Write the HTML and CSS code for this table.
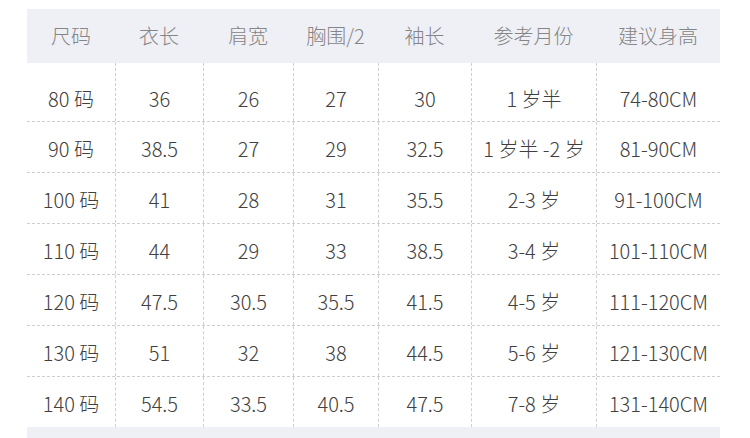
FILE: index.html
```html
<!DOCTYPE html>
<html lang="zh">
<head>
<meta charset="utf-8">
<link rel="stylesheet" href="styles.css">
</head>
<body>
<div class="sheet">
  <div class="row head">
    <div class="cell">尺码</div><div class="cell">衣长</div><div class="cell">肩宽</div><div class="cell">胸围/2</div><div class="cell">袖长</div><div class="cell">参考月份</div><div class="cell">建议身高</div>
  </div>
  <div class="row first">
    <div class="cell">80 码</div><div class="cell">36</div><div class="cell">26</div><div class="cell">27</div><div class="cell">30</div><div class="cell">1 岁半</div><div class="cell">74-80CM</div>
  </div>
  <div class="row">
    <div class="cell">90 码</div><div class="cell">38.5</div><div class="cell">27</div><div class="cell">29</div><div class="cell">32.5</div><div class="cell">1 岁半 -2 岁</div><div class="cell">81-90CM</div>
  </div>
  <div class="row">
    <div class="cell">100 码</div><div class="cell">41</div><div class="cell">28</div><div class="cell">31</div><div class="cell">35.5</div><div class="cell">2-3 岁</div><div class="cell">91-100CM</div>
  </div>
  <div class="row">
    <div class="cell">110 码</div><div class="cell">44</div><div class="cell">29</div><div class="cell">33</div><div class="cell">38.5</div><div class="cell">3-4 岁</div><div class="cell">101-110CM</div>
  </div>
  <div class="row">
    <div class="cell">120 码</div><div class="cell">47.5</div><div class="cell">30.5</div><div class="cell">35.5</div><div class="cell">41.5</div><div class="cell">4-5 岁</div><div class="cell">111-120CM</div>
  </div>
  <div class="row">
    <div class="cell">130 码</div><div class="cell">51</div><div class="cell">32</div><div class="cell">38</div><div class="cell">44.5</div><div class="cell">5-6 岁</div><div class="cell">121-130CM</div>
  </div>
  <div class="row">
    <div class="cell">140 码</div><div class="cell">54.5</div><div class="cell">33.5</div><div class="cell">40.5</div><div class="cell">47.5</div><div class="cell">7-8 岁</div><div class="cell">131-140CM</div>
  </div>
  <div class="foot"></div>
</div>
</body>
</html>
```

FILE: styles.css
```css
html, body {
  margin: 0;
  padding: 0;
  background: #ffffff;
}
body {
  font-family: "Noto Sans CJK SC", "Noto Sans", sans-serif;
  font-size: 20px;
  font-weight: 300;
  color: #404040;
}
.sheet {
  width: 693px;
  margin: 9px 0 0 27px;
}
.row {
  display: grid;
  grid-template-columns: 88px 88px 90px 85px 93px 125px 124px;
  border-top: 1px dashed #cfcfcf;
}
.cell {
  text-align: center;
  white-space: nowrap;
  padding-top: 5px;
  height: 45px;
  line-height: 44px;
  border-left: 1px dashed #cfcfcf;
}
.cell:first-child {
  border-left: none;
}
.head {
  background: #eff0f5;
  border-top: none;
  color: #858585;
}
.head .cell {
  border-left: none;
  height: 54px;
  padding-top: 0;
  line-height: 54px;
}
.first {
  border-top: none;
}
.first .cell {
  height: 44px;
  padding-top: 14px;
}
.foot {
  height: 12px;
  background: #eff0f5;
}
```
